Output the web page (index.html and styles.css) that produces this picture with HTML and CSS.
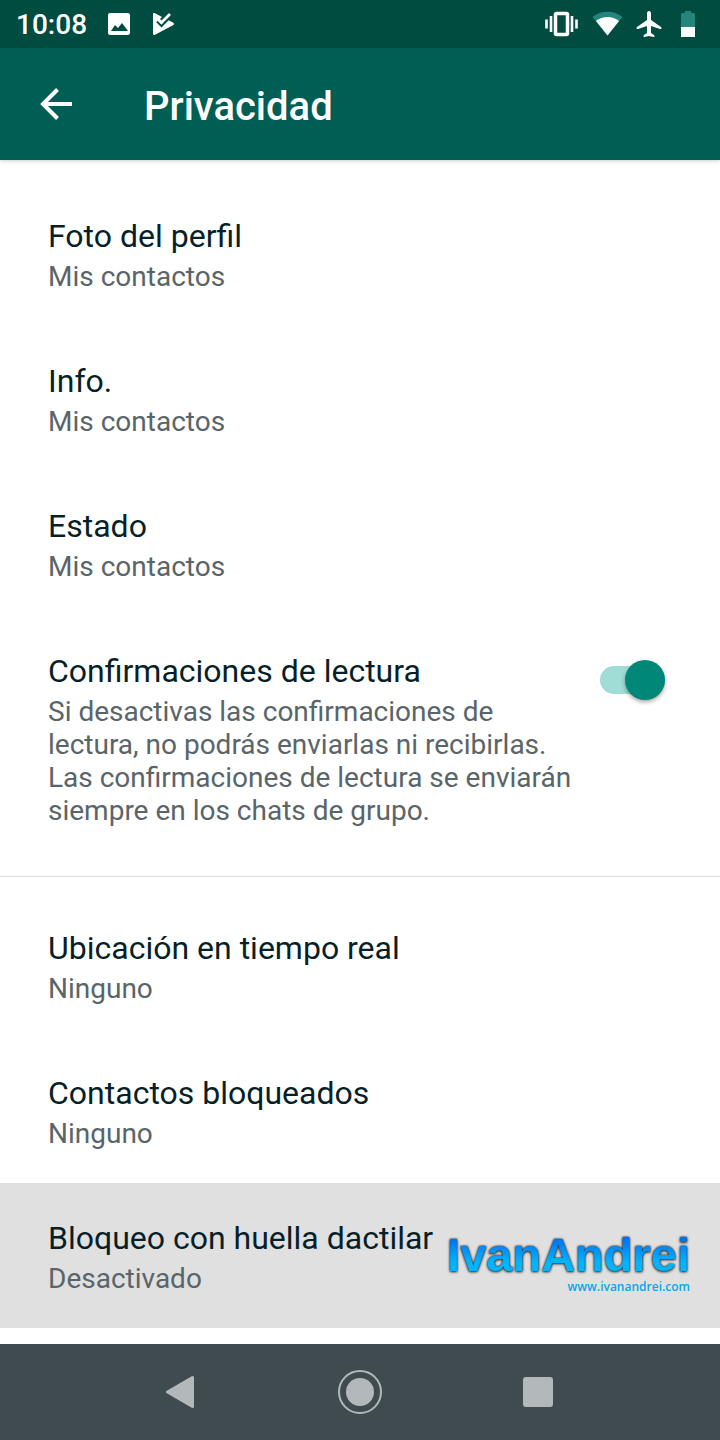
FILE: index.html
```
<!DOCTYPE html>
<html lang="es">
<head>
  <meta charset="UTF-8">
  <title>Privacidad</title>
  <meta name="viewport" content="width=device-width, initial-scale=1.0">
  <link rel="stylesheet" href="styles.css">
</head>
<body>
  <div class="statusbar">
    <span class="clock">10:08</span>
    <svg width="24" height="24" viewBox="0 0 24 24">
      <path fill="#fff" fill-rule="evenodd" d="M3 1h18a2 2 0 0 1 2 2v18a2 2 0 0 1-2 2H3a2 2 0 0 1-2-2V3a2 2 0 0 1 2-2zM4 19h17l-6-8-4 5-3-3z"/>
    </svg>
    <svg class="icon-play" width="24" height="24" viewBox="0 0 24 24">
      <path fill="#fff" d="M2 2.500C2 1 3 .8 4 1.300L11 5 22 10.500c1.300.8 1.300 2 0 2.800L4 22.700c-1 .5-2 .2-2-1.200z"/>
      <path fill="none" stroke="#004c41" stroke-width="5.500" d="M10 10l9.500-9.500"/>
      <path fill="none" stroke="#004c41" stroke-width="2" d="M6 9.500l4.500 4.500 6.500-6.500"/>
      <path fill="none" stroke="#fff" stroke-width="2.800" d="M6.500 6.500l4 4 8.500-8.500"/>
    </svg>
    <div class="status-right">
      <svg width="34" height="26" viewBox="0 0 34 26">
        <rect x="11.500" y="2.500" width="12" height="21" rx="1" fill="none" stroke="#fff" stroke-width="3.500"/>
        <path fill="none" stroke="#fff" stroke-width="2.600" d="M2.500 8.500v9M7 5v16M28 5v16M32.500 8.500v9"/>
      </svg>
      <svg width="32" height="26" viewBox="0 0 32 26">
        <path fill="#24857a" d="M16.500 24.500L1.500 6a24 24 0 0 1 30 0z"/>
        <path fill="#fff" d="M16.500 24.500L5 10a19 19 0 0 1 23 0z"/>
      </svg>
      <svg width="26" height="28" viewBox="0 0 26 28">
        <path fill="#fff" d="M13 1c1.200 0 2 1 2 2v7l10 7c1 1 .5 2.500-1 2l-9-3v7l3 2c1 1 .5 2-.5 2L13 26l-4.500 1c-1 0-1.500-1-.5-2l3-2v-7l-9 3c-1.500.5-2-1-1-2l10-7V3c0-1 .8-2 2-2z"/>
      </svg>
      <svg class="icon-battery" width="14" height="26" viewBox="0 0 14 26">
        <path fill="#24857a" d="M4 0h6v2h3l1 1v13H0V3l1-1h3z"/>
        <path fill="#fff" d="M0 16h14v10H0z"/>
      </svg>
    </div>
  </div>

  <header class="appbar">
    <button class="back" aria-label="Atrás">
      <svg width="32" height="32" viewBox="0 0 32 32">
        <path fill="none" stroke="#fff" stroke-width="4" d="M32 16H3M17.500 1.500L3 16l14.500 14.500"/>
      </svg>
    </button>
    <h1>Privacidad</h1>
  </header>

  <main>
    <section class="group">
      <button class="row">
        <span class="title">Foto del perfil</span>
        <span class="value">Mis contactos</span>
      </button>
      <button class="row">
        <span class="title">Info.</span>
        <span class="value">Mis contactos</span>
      </button>
      <button class="row">
        <span class="title">Estado</span>
        <span class="value">Mis contactos</span>
      </button>
      <div class="row row-switch">
        <label for="receipts">
          <span class="title">Confirmaciones de lectura</span>
          <span class="value">Si desactivas las confirmaciones de lectura, no podrás enviarlas ni recibirlas. Las confirmaciones de lectura se enviarán siempre en los chats de grupo.</span>
        </label>
        <input class="switch" id="receipts" type="checkbox" checked>
      </div>
    </section>
    <section class="group">
      <button class="row">
        <span class="title">Ubicación en tiempo real</span>
        <span class="value">Ninguno</span>
      </button>
      <button class="row">
        <span class="title">Contactos bloqueados</span>
        <span class="value">Ninguno</span>
      </button>
      <div class="pressed">
        <button class="row">
          <span class="title">Bloqueo con huella dactilar</span>
          <span class="value">Desactivado</span>
        </button>
        <div class="watermark">
          <span class="brand">IvanAndrei</span>
          <a href="#">www.ivanandrei.com</a>
        </div>
      </div>
    </section>
  </main>

  <nav class="navbar">
    <button aria-label="Atrás">
      <svg width="44" height="44" viewBox="0 0 44 44">
        <path fill="#b3b9bb" stroke="#b3b9bb" stroke-width="3" stroke-linejoin="round" d="M9.500 22L34.500 7.500v29z"/>
      </svg>
    </button>
    <button aria-label="Inicio">
      <svg width="44" height="44" viewBox="0 0 44 44">
        <circle cx="22" cy="22" r="21" fill="none" stroke="#b3b9bb" stroke-width="2"/>
        <circle cx="22" cy="22" r="14" fill="#b3b9bb"/>
      </svg>
    </button>
    <button aria-label="Recientes">
      <svg width="44" height="44" viewBox="0 0 44 44">
        <rect x="7" y="7" width="30" height="30" rx="3" fill="#b3b9bb"/>
      </svg>
    </button>
  </nav>
</body>
</html>
```
FILE: styles.css
```
* {
  box-sizing: border-box;
}
body {
  margin: 0;
  min-height: 100vh;
  display: flex;
  flex-direction: column;
  font-family: Roboto, sans-serif;
  background: #fff;
  color: #071f28;
}
button {
  border: none;
  background: none;
  padding: 0;
  font: inherit;
  color: inherit;
  cursor: pointer;
}
svg {
  display: block;
}
.statusbar {
  height: 48px;
  display: flex;
  align-items: center;
  padding: 0 25px 0 16px;
  background: #004c41;
  color: #fff;
}
.clock {
  font-size: 28px;
  font-weight: 500;
  margin-right: 20px;
}
.icon-play {
  margin-left: 20px;
}
.status-right {
  display: flex;
  align-items: center;
  margin-left: auto;
  gap: 13px;
}
.icon-battery {
  margin-left: 6px;
}
.appbar {
  height: 112px;
  display: flex;
  align-items: center;
  padding: 0 40px;
  background: #015e54;
  color: #fff;
  box-shadow: 0 1px 4px rgba(0, 0, 0, 0.2);
}
.back {
  margin-right: 72px;
}
h1 {
  margin: 6px 0 0;
  font-size: 40px;
  line-height: 48px;
  font-weight: 500;
}
main {
  flex: 1;
  padding-top: 5px;
}
.group {
  padding: 16px 0;
}
.group + .group {
  border-top: 1px solid #dcdcdc;
}
.row {
  display: block;
  width: 100%;
  padding: 36px 48px 33px;
  text-align: left;
}
.title, .value {
  display: block;
}
.title {
  font-size: 32px;
  line-height: 38px;
  margin-bottom: 5px;
}
.value {
  font-size: 28px;
  line-height: 33px;
  color: #596569;
}
.row-switch {
  display: flex;
  align-items: flex-start;
  justify-content: space-between;
  gap: 24px;
  padding-right: 55px;
}
.switch {
  appearance: none;
  flex: none;
  position: relative;
  width: 65px;
  height: 28px;
  margin: 14px 0 0;
  border-radius: 14px;
  background: #a0ddd7;
}
.switch::after {
  content: "";
  position: absolute;
  top: -6px;
  right: 0;
  width: 40px;
  height: 40px;
  border-radius: 50%;
  background: #018777;
  box-shadow: 0 2px 4px rgba(0, 0, 0, 0.35);
}
.pressed {
  position: relative;
  background: #e0e0e0;
}
.watermark {
  position: absolute;
  right: 30px;
  bottom: 34px;
  text-align: right;
  font-family: "Liberation Sans", Arial, sans-serif;
}
.brand {
  display: block;
  font-size: 47px;
  line-height: 48px;
  font-weight: bold;
  color: transparent;
  background: linear-gradient(#0070f0 15%, #00b4ff 65%);
  -webkit-background-clip: text;
  background-clip: text;
  filter: drop-shadow(0 0 1px #222) drop-shadow(0 1px 1px #555);
}
.watermark a {
  display: block;
  font-family: "Open Sans", sans-serif;
  font-size: 12px;
  line-height: 15px;
  font-weight: 600;
  color: #0aa4ee;
  text-decoration: none;
}
.navbar {
  height: 96px;
  display: flex;
  justify-content: center;
  align-items: center;
  gap: 134px;
  background: #3f4b4f;
}
.navbar button:first-child {
  margin-left: -2px;
  margin-right: 2px;
}
```
